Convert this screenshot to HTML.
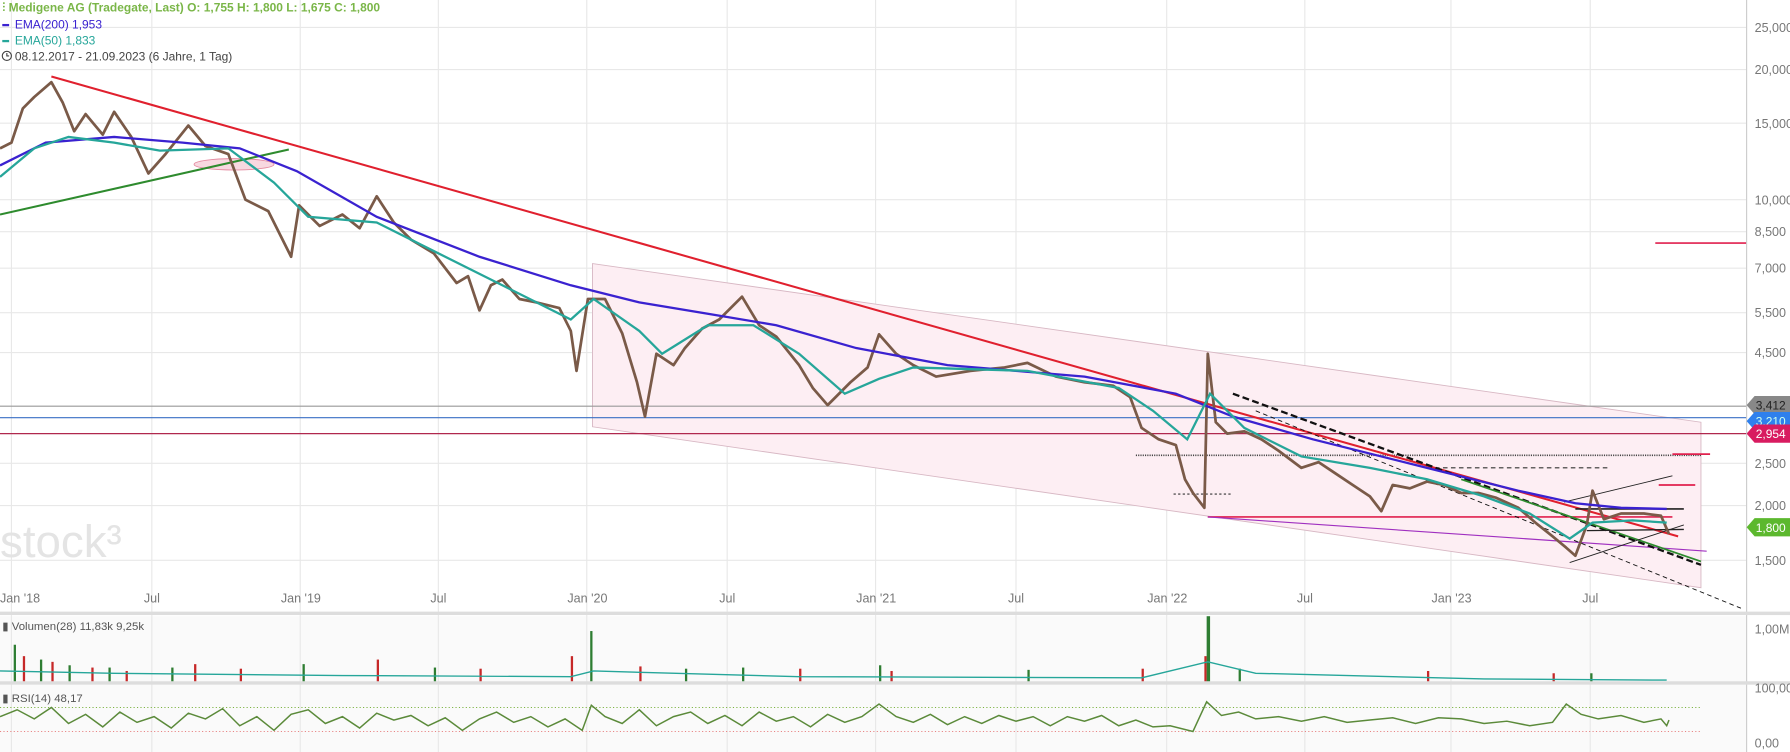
<!DOCTYPE html>
<html><head><meta charset="utf-8"><style>
html,body{margin:0;padding:0;background:#fff;width:1790px;height:752px;overflow:hidden}
svg{display:block}
text{font-family:"Liberation Sans",sans-serif}
</style></head><body>
<svg width="1790" height="752" viewBox="0 0 1568 659" preserveAspectRatio="none" xmlns="http://www.w3.org/2000/svg">
<rect width="1568" height="659" fill="#fff"/>
<rect x="0" y="540" width="1530" height="57" fill="#fafafa"/>
<rect x="0" y="600" width="1530" height="59" fill="#fafafa"/>
<g stroke="#e8e8e8" stroke-width="1">
<line x1="0" y1="24" x2="1530" y2="24"/><line x1="0" y1="61" x2="1530" y2="61"/><line x1="0" y1="108" x2="1530" y2="108"/><line x1="0" y1="175" x2="1530" y2="175"/><line x1="0" y1="203" x2="1530" y2="203"/><line x1="0" y1="235" x2="1530" y2="235"/><line x1="0" y1="274" x2="1530" y2="274"/><line x1="0" y1="309" x2="1530" y2="309"/><line x1="0" y1="406" x2="1530" y2="406"/><line x1="0" y1="443" x2="1530" y2="443"/><line x1="0" y1="491" x2="1530" y2="491"/>
<line x1="10" y1="0" x2="10" y2="659"/><line x1="133" y1="0" x2="133" y2="659"/><line x1="263" y1="0" x2="263" y2="659"/><line x1="384" y1="0" x2="384" y2="659"/><line x1="514" y1="0" x2="514" y2="659"/><line x1="637" y1="0" x2="637" y2="659"/><line x1="767" y1="0" x2="767" y2="659"/><line x1="890" y1="0" x2="890" y2="659"/><line x1="1022" y1="0" x2="1022" y2="659"/><line x1="1143" y1="0" x2="1143" y2="659"/><line x1="1271" y1="0" x2="1271" y2="659"/><line x1="1393" y1="0" x2="1393" y2="659"/>
</g>
<text x="0" y="488" font-size="40" fill="#e4e4e4">stock³</text>
<polygon points="519,231 1490,370 1490,515 519,374" fill="#fdeef3" stroke="#d8b8c4" stroke-width="0.8"/>
<ellipse cx="205" cy="144" rx="35" ry="5" fill="#f8d8e0" stroke="#e48aa0" stroke-width="0.8"/>
<line x1="0" y1="356" x2="1530" y2="356" stroke="#999" stroke-width="1"/>
<line x1="0" y1="366" x2="1530" y2="366" stroke="#3a6fc4" stroke-width="1"/>
<line x1="0" y1="380" x2="1530" y2="380" stroke="#b0284e" stroke-width="1"/>
<line x1="995" y1="399" x2="1490" y2="399" stroke="#444" stroke-width="1.5" stroke-dasharray="1,1"/>
<line x1="1250" y1="410" x2="1410" y2="410" stroke="#333" stroke-width="1" stroke-dasharray="4,3"/>
<line x1="1028" y1="433" x2="1078" y2="433" stroke="#333" stroke-width="1" stroke-dasharray="2,2"/>
<line x1="1450" y1="213" x2="1530" y2="213" stroke="#e0204e" stroke-width="1.5"/>
<line x1="1465" y1="398" x2="1498" y2="398" stroke="#e0204e" stroke-width="1.5"/>
<line x1="1453" y1="425" x2="1485" y2="425" stroke="#e0204e" stroke-width="1.5"/>
<line x1="0" y1="188" x2="253" y2="131" stroke="#2e8b2e" stroke-width="1.8"/>
<polyline points="45,67 1065,356 1470,470" fill="none" stroke="#e0202e" stroke-width="1.8"/>
<line x1="1058" y1="453" x2="1465" y2="453" stroke="#e0204e" stroke-width="1.5"/>
<line x1="1058" y1="453" x2="1495" y2="483" stroke="#a030c0" stroke-width="1"/>
<line x1="1080" y1="345" x2="1490" y2="495" stroke="#111" stroke-width="2" stroke-dasharray="6,3"/>
<line x1="1100" y1="360" x2="1525" y2="533" stroke="#111" stroke-width="0.8" stroke-dasharray="4,3"/>
<line x1="1280" y1="420" x2="1490" y2="492" stroke="#2e8b2e" stroke-width="1.5"/>
<line x1="1370" y1="440" x2="1465" y2="417" stroke="#222" stroke-width="0.8"/>
<line x1="1380" y1="446" x2="1475" y2="446" stroke="#222" stroke-width="1.5"/>
<line x1="1375" y1="493" x2="1475" y2="460" stroke="#222" stroke-width="0.8"/>
<line x1="1390" y1="465" x2="1475" y2="464" stroke="#222" stroke-width="1.2"/>
<polyline fill="none" stroke="#7a5a48" stroke-width="2.4" stroke-linejoin="round" points="0,130 10,125 20,95 30,85 45,72 55,90 65,115 75,100 90,118 100,98 115,120 130,152 145,135 165,110 180,128 200,135 215,175 235,185 255,225 262,180 280,198 300,188 315,200 330,172 345,195 360,210 380,222 400,248 410,242 420,272 430,250 440,245 455,262 470,265 490,270 500,290 505,325 515,262 530,262 545,292 558,335 565,365 575,310 590,320 600,305 615,288 630,280 650,260 665,285 680,295 700,320 712,340 725,355 745,335 760,322 770,293 785,310 800,320 820,330 850,325 880,322 900,318 925,330 950,335 975,338 990,348 1000,375 1015,385 1030,390 1038,420 1045,432 1055,445 1058,310 1065,370 1075,380 1090,378 1105,385 1120,395 1140,410 1155,405 1170,415 1185,425 1200,435 1210,448 1220,425 1235,428 1250,422 1265,425 1280,432 1295,432 1310,436 1330,445 1345,458 1360,470 1372,480 1380,487 1390,460 1395,430 1405,455 1420,450 1440,450 1455,452 1462,468"/>
<polyline fill="none" stroke="#3a22d0" stroke-width="2" points="0,145 40,125 100,120 160,125 210,130 260,150 330,190 420,225 500,250 560,265 620,275 680,285 750,305 830,320 950,330 1030,345 1080,365 1150,385 1250,410 1330,430 1380,441 1420,445 1460,446"/>
<polyline fill="none" stroke="#26a69a" stroke-width="2" points="0,155 30,130 60,120 100,125 140,132 200,130 240,160 270,190 330,195 380,220 440,250 500,280 520,262 560,290 580,310 620,285 660,285 700,310 740,345 770,332 800,322 900,325 980,340 1010,360 1040,385 1060,345 1090,375 1140,400 1200,410 1250,420 1300,435 1340,450 1375,472 1395,458 1430,456 1460,458"/>
<line x1="1530" y1="0" x2="1530" y2="659" stroke="#ccc"/>
<rect x="0" y="536" width="1568" height="3" fill="#ddd"/>
<rect x="0" y="597" width="1568" height="3" fill="#ddd"/>
<g font-size="11" fill="#777">
<text x="1537" y="28">25,000</text><text x="1537" y="65">20,000</text><text x="1537" y="112">15,000</text><text x="1537" y="179">10,000</text><text x="1537" y="207">8,500</text><text x="1537" y="239">7,000</text><text x="1537" y="278">5,500</text><text x="1537" y="313">4,500</text><text x="1537" y="410">2,500</text><text x="1537" y="447">2,000</text><text x="1537" y="495">1,500</text>
<text x="1537" y="555">1,00M</text><text x="1537" y="607">100,00</text><text x="1537" y="655">0,00</text>
<text x="0" y="528">Jan '18</text><text x="126" y="528">Jul</text><text x="246" y="528">Jan '19</text><text x="377" y="528">Jul</text><text x="497" y="528">Jan '20</text><text x="630" y="528">Jul</text><text x="750" y="528">Jan '21</text><text x="883" y="528">Jul</text><text x="1005" y="528">Jan '22</text><text x="1136" y="528">Jul</text><text x="1254" y="528">Jan '23</text><text x="1386" y="528">Jul</text>
</g>
<g font-size="10.5" fill="#fff">
<polygon points="1530,355 1537,347 1568,347 1568,363 1537,363" fill="#888"/><text x="1538" y="359" fill="#222">3,412</text>
<polygon points="1530,369 1537,361 1568,361 1568,377 1537,377" fill="#2f80ed"/><text x="1538" y="373" fill="#cfe">3,210</text>
<polygon points="1530,380 1537,372 1568,372 1568,388 1537,388" fill="#d81b60"/><text x="1538" y="384">2,954</text>
<polygon points="1530,462 1537,454 1568,454 1568,470 1537,470" fill="#5cb82e"/><text x="1538" y="466">1,800</text>
</g>
<g fill="#c62828">
<rect x="20" y="575" width="2" height="22"/><rect x="45" y="580" width="2" height="17"/><rect x="80" y="585" width="2" height="12"/><rect x="110" y="588" width="2" height="9"/><rect x="170" y="582" width="2" height="15"/><rect x="210" y="586" width="2" height="11"/><rect x="330" y="578" width="2" height="19"/><rect x="420" y="586" width="2" height="11"/><rect x="500" y="575" width="2" height="22"/><rect x="560" y="584" width="2" height="13"/><rect x="700" y="586" width="2" height="11"/><rect x="780" y="588" width="2" height="9"/><rect x="1000" y="586" width="2" height="11"/><rect x="1055" y="575" width="2" height="22"/><rect x="1250" y="588" width="2" height="9"/><rect x="1360" y="590" width="2" height="7"/>
</g>
<g fill="#2e7d32">
<rect x="12" y="565" width="2" height="32"/><rect x="35" y="578" width="2" height="19"/><rect x="60" y="583" width="2" height="14"/><rect x="95" y="585" width="2" height="12"/><rect x="150" y="585" width="2" height="12"/><rect x="265" y="582" width="2" height="15"/><rect x="380" y="585" width="2" height="12"/><rect x="517" y="553" width="2" height="44"/><rect x="600" y="586" width="2" height="11"/><rect x="650" y="585" width="2" height="12"/><rect x="770" y="583" width="2" height="14"/><rect x="900" y="587" width="2" height="10"/><rect x="1057" y="540" width="3" height="57"/><rect x="1085" y="586" width="2" height="11"/><rect x="1393" y="590" width="2" height="7"/>
</g>
<polyline fill="none" stroke="#26a69a" stroke-width="1.2" points="0,588 100,590 300,592 500,593 520,588 700,593 1000,594 1058,580 1100,590 1300,595 1460,596"/>
<text x="2" y="552" font-size="10" fill="#555">▮ Volumen(28)  11,83k  9,25k</text>
<line x1="0" y1="620" x2="1490" y2="620" stroke="#7cb342" stroke-width="0.8" stroke-dasharray="1,2"/>
<line x1="0" y1="641" x2="1490" y2="641" stroke="#e57373" stroke-width="0.8" stroke-dasharray="1,2"/>
<polyline fill="none" stroke="#5b8a3a" stroke-width="1.3" points="0,628 15,622 30,630 45,620 60,634 75,626 90,637 105,624 120,633 135,628 150,638 165,625 180,630 195,621 210,636 225,628 240,640 255,626 270,622 285,634 300,628 315,638 330,625 345,631 360,627 375,636 390,629 405,640 420,630 435,624 450,633 465,628 480,637 495,630 510,640 518,618 530,628 545,634 560,622 575,636 590,628 605,624 620,634 635,627 650,636 665,624 680,632 695,628 710,637 725,626 740,633 755,628 770,617 785,628 800,633 815,626 830,635 845,628 860,634 875,627 890,632 905,628 920,636 935,628 950,632 965,627 980,636 995,631 1010,637 1025,636 1045,641 1057,615 1070,627 1085,624 1100,630 1120,628 1140,632 1160,628 1180,633 1200,631 1220,629 1240,634 1260,629 1280,630 1300,634 1320,632 1340,636 1360,633 1372,617 1385,626 1400,630 1420,627 1440,633 1455,630 1460,636 1462,631"/>
<text x="2" y="615" font-size="10" fill="#555">▮ RSI(14)  48,17</text>
<text x="2" y="10" font-size="10.5" fill="#7ab648" font-weight="600">⫶ Medigene AG (Tradegate, Last)  O: 1,755  H: 1,800  L: 1,675  C: 1,800</text>
<rect x="2" y="21" width="6" height="2" fill="#3a22d0"/><text x="13" y="25" font-size="10.5" fill="#3a22d0">EMA(200)  1,953</text>
<rect x="2" y="35" width="6" height="2" fill="#26a69a"/><text x="13" y="39" font-size="10.5" fill="#26a69a">EMA(50)  1,833</text>
<circle cx="6" cy="49" r="4" fill="none" stroke="#444" stroke-width="1"/><path d="M6 46.5V49H8" stroke="#444" fill="none"/>
<text x="13" y="53" font-size="10.5" fill="#444">08.12.2017 - 21.09.2023   (6 Jahre, 1 Tag)</text>
</svg>
</body></html>
